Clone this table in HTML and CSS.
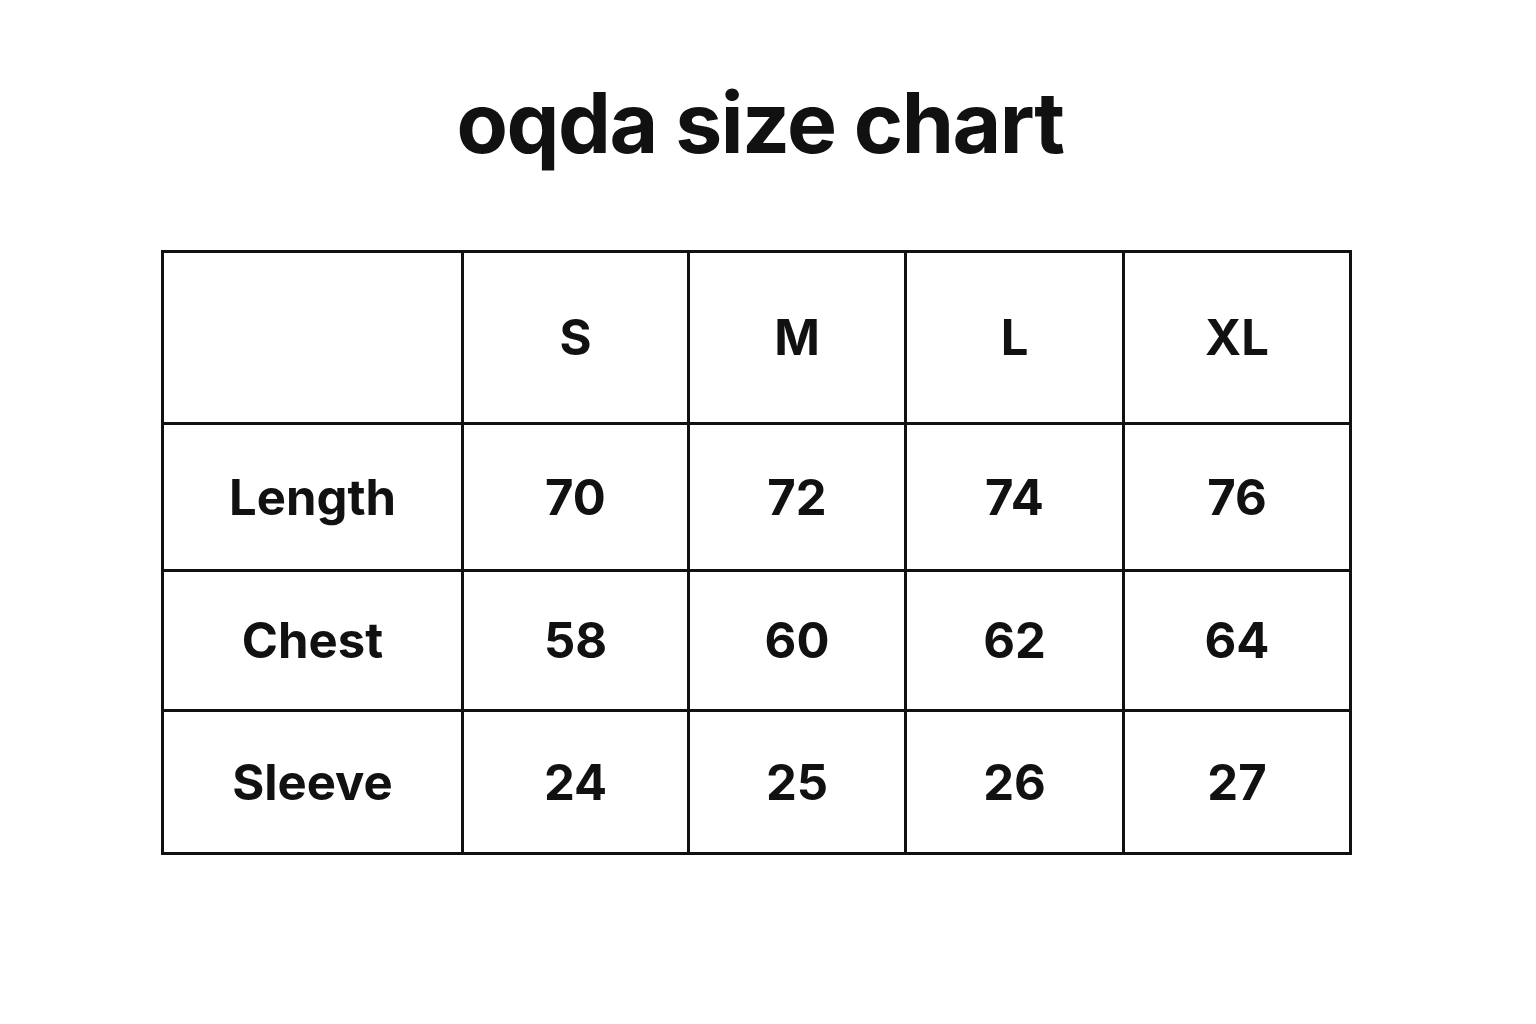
FILE: index.html
```html
<!DOCTYPE html>
<html>
<head>
<meta charset="utf-8">
<link rel="stylesheet" href="styles.css">
</head>
<body>
<main class="page">
  <h1 class="title">oqda size chart</h1>
  <table class="chart">
    <colgroup>
      <col class="c0"><col class="c1"><col class="c2"><col class="c3"><col class="c4">
    </colgroup>
    <tr class="r-head"><td></td><td>S</td><td>M</td><td>L</td><td>XL</td></tr>
    <tr class="r1"><td>Length</td><td>70</td><td>72</td><td>74</td><td>76</td></tr>
    <tr class="r2"><td>Chest</td><td>58</td><td>60</td><td>62</td><td>64</td></tr>
    <tr class="r3"><td>Sleeve</td><td>24</td><td>25</td><td>26</td><td>27</td></tr>
  </table>
</main>
</body>
</html>
```
FILE: styles.css
```css
html, body {
  margin: 0;
  padding: 0;
  background: #ffffff;
}
.page {
  width: 1536px;
  height: 1024px;
  display: flex;
  flex-direction: column;
  font-family: Inter, "Liberation Sans", sans-serif;
  color: #111111;
}
.title {
  margin: 81px 0 0 0;
  padding-left: 0;
  font-size: 84px;
  line-height: 84px;
  font-weight: 700;
  letter-spacing: -1.5px;
  text-align: center;
  width: 1520px;
}
.chart {
  margin: 85px 0 0 161px;
  border-collapse: collapse;
  table-layout: fixed;
  width: 1188px;
}
.chart td {
  border: 3px solid #111111;
  padding: 0;
  text-align: center;
  vertical-align: middle;
  font-size: 49px;
  font-weight: 700;
}
.c0 { width: 300px; }
.c1 { width: 226px; }
.c2 { width: 217px; }
.c3 { width: 218px; }
.c4 { width: 227px; }
.r-head td { height: 169px; }
.r1 td { height: 144px; }
.r2 td { height: 137px; }
.r3 td { height: 140px; }
```
